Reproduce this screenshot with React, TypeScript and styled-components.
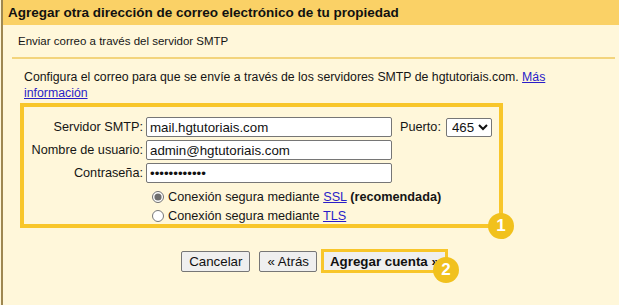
import React from 'react'
import styled, { createGlobalStyle } from 'styled-components';

const GlobalStyle = createGlobalStyle`
  html, body {
    margin: 0;
    padding: 0;
    background: #fff7da;
  }
  body {
    font-family: "Liberation Sans", Arial, sans-serif;
    color: #151515;
  }
`;

const App: React.FC = () => {
  return (
    <>
      <GlobalStyle />
      <Page>
        <Header>
          <Title>Agregar otra dirección de correo electrónico de tu propiedad</Title>
        </Header>
        <Section>
          <Subtitle>Enviar correo a través del servidor SMTP</Subtitle>
          <Divider />
          <Intro>
            Configura el correo para que se envíe a través de los servidores SMTP de hgtutoriais.com. <Link href="#">Más información</Link>
          </Intro>

          <Highlight>
            <FormGrid>
              <Label>Servidor SMTP:</Label>
              <TextInput readOnly value="mail.hgtutoriais.com" />
              <PortCell>
                <Label>Puerto:</Label>
                <PortSelect defaultValue="465">
                  <option value="465">465</option>
                  <option value="587">587</option>
                </PortSelect>
              </PortCell>

              <Label>Nombre de usuario:</Label>
              <TextInput readOnly value="admin@hgtutoriais.com" />
              <span />

              <Label>Contraseña:</Label>
              <TextInput readOnly type="password" value="abcdefghijkl" />
              <span />
            </FormGrid>

            <Radios>
              <RadioRow>
                <Radio type="radio" name="sec" defaultChecked />
                <span>Conexión segura mediante <Link href="#">SSL</Link> <b>(recomendada)</b></span>
              </RadioRow>
              <RadioRow>
                <Radio type="radio" name="sec" />
                <span>Conexión segura mediante <Link href="#">TLS</Link></span>
              </RadioRow>
            </Radios>

            <Badge $right={-15} $bottom={-15}>1</Badge>
          </Highlight>

          <Actions>
            <Button>Cancelar</Button>
            <Button>« Atrás</Button>
            <MarkedButton>
              <Button $primary>Agregar cuenta »</Button>
              <Badge $right={-14} $bottom={-13}>2</Badge>
            </MarkedButton>
          </Actions>
        </Section>
      </Page>
    </>
  )
}

const Page = styled.div`
  margin-left: 1px;
  border-left: 2px solid #9e8751;
  min-height: 305px;
  box-sizing: border-box;
  display: flex;
  flex-direction: column;
`;

const Header = styled.div`
  height: 25px;
  background: #fad166;
  display: flex;
  align-items: center;
  padding-left: 5px;
`;

const Title = styled.h1`
  margin: 0;
  font-size: 13.5px;
  font-weight: bold;
  color: #111;
`;

const Section = styled.div`
  display: flex;
  flex-direction: column;
`;

const Subtitle = styled.div`
  height: 32px;
  display: flex;
  align-items: center;
  padding-left: 15px;
  font-size: 11.5px;
`;

const Divider = styled.div`
  height: 2px;
  margin: 0 4px 0 9px;
  background: #f3d47c;
`;

const Intro = styled.p`
  margin: 10px 20px 0 21px;
  font-size: 12.3px;
  line-height: 16px;
`;

const Link = styled.a`
  color: #2a1dc8;
  text-decoration: underline;
`;

const Highlight = styled.div`
  position: relative;
  margin: 2px 0 0 17px;
  width: 483px;
  height: 125px;
  box-sizing: border-box;
  border: 4px solid #f8c62a;
  padding-top: 10px;
`;

const FormGrid = styled.div`
  display: grid;
  grid-template-columns: 119px 246px auto;
  grid-auto-rows: 20px;
  column-gap: 3px;
  row-gap: 3px;
  align-items: center;
`;

const Label = styled.span`
  text-align: right;
  font-size: 12.7px;
  white-space: nowrap;
`;

const TextInput = styled.input`
  box-sizing: border-box;
  width: 246px;
  height: 20px;
  padding: 0 3px;
  border: 1px solid #767676;
  border-radius: 2px;
  background: #fff;
  font-family: inherit;
  font-size: 13.3px;
  color: #111;
  outline: none;
`;

const PortCell = styled.div`
  display: flex;
  align-items: center;
  gap: 5px;
  padding-left: 5px;
`;

const PortSelect = styled.select`
  box-sizing: border-box;
  width: 46px;
  height: 19px;
  border: 1px solid #767676;
  border-radius: 2px;
  background: #fff;
  font-family: inherit;
  font-size: 13.3px;
  color: #111;
  padding: 0 1px;
`;

const Radios = styled.div`
  display: flex;
  flex-direction: column;
  margin-top: 4px;
  padding-left: 128px;
`;

const RadioRow = styled.label`
  display: flex;
  align-items: center;
  height: 19px;
  font-size: 12.7px;
  white-space: nowrap;

  b {
    font-weight: bold;
  }
`;

const Radio = styled.input`
  width: 12px;
  height: 12px;
  margin: 0 4px 0 0;
  accent-color: #6e6e6e;
`;

const Badge = styled.span<{ $right: number; $bottom: number }>`
  position: absolute;
  right: ${({ $right }) => $right}px;
  bottom: ${({ $bottom }) => $bottom}px;
  width: 26px;
  height: 26px;
  border-radius: 50%;
  background: #f1c11d;
  color: #fff;
  font-family: "Liberation Sans", Arial, sans-serif;
  font-weight: bold;
  font-size: 17px;
  display: flex;
  align-items: center;
  justify-content: center;
`;

const Actions = styled.div`
  display: flex;
  align-items: center;
  justify-content: center;
  gap: 9px;
  margin-top: 21px;
  padding-left: 7px;
`;

const Button = styled.button<{ $primary?: boolean }>`
  box-sizing: border-box;
  height: ${({ $primary }) => ($primary ? '18px' : '21px')};
  padding: ${({ $primary }) => ($primary ? '0 6px' : '0 7px')};
  border: ${({ $primary }) => ($primary ? 'none' : '1px solid #767676')};
  border-radius: 2px;
  background: #efefef;
  font-family: inherit;
  font-size: 13.33px;
  font-weight: ${({ $primary }) => ($primary ? 'bold' : 'normal')};
  color: #111;
`;

const MarkedButton = styled.span`
  position: relative;
  display: inline-flex;
  margin-left: -5px;
  border: 3px solid #f8c62a;
`;

export default App;
